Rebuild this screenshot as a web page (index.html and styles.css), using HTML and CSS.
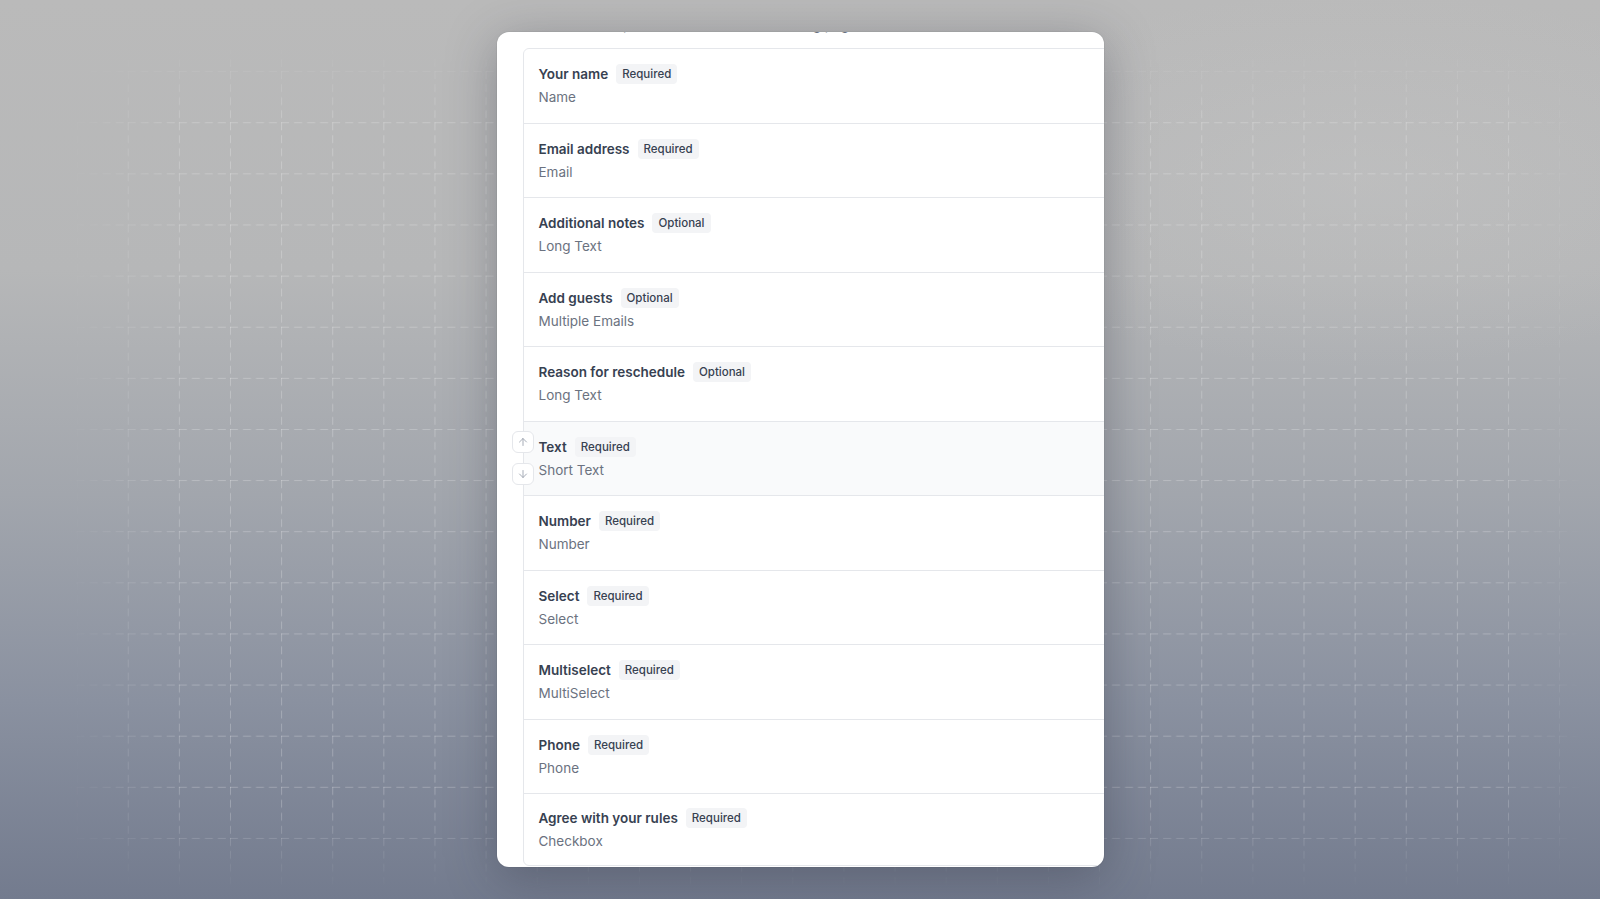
FILE: index.html
```html
<!DOCTYPE html>
<html lang="en">
<head>
<meta charset="utf-8">
<title>Booking questions</title>
<link rel="stylesheet" href="styles.css">
</head>
<body>
<svg class="grid" width="1600" height="899" aria-hidden="true">
  <defs>
    <pattern id="cells" x="25.5" y="20" width="51.12" height="51.12" patternUnits="userSpaceOnUse">
      <line x1="0.5" y1="0" x2="0.5" y2="51.12" stroke="rgba(255,255,255,0.24)" stroke-width="1" stroke-dasharray="8 5"/>
      <line x1="0" y1="0.5" x2="51.12" y2="0.5" stroke="rgba(255,255,255,0.24)" stroke-width="1" stroke-dasharray="8 5"/>
    </pattern>
  </defs>
  <rect width="1600" height="899" fill="url(#cells)"/>
</svg>

<main class="modal">
  <div class="modal-scroll">
    <p class="desc">Customize the questions asked on the booking page</p>
    <div class="card">
      <div class="row">
        <div class="label-line"><span class="label">Your name</span><span class="badge">Required</span></div>
        <div class="type">Name</div>
      </div>
      <div class="row">
        <div class="label-line"><span class="label">Email address</span><span class="badge">Required</span></div>
        <div class="type">Email</div>
      </div>
      <div class="row">
        <div class="label-line"><span class="label">Additional notes</span><span class="badge">Optional</span></div>
        <div class="type">Long Text</div>
      </div>
      <div class="row">
        <div class="label-line"><span class="label">Add guests</span><span class="badge">Optional</span></div>
        <div class="type">Multiple Emails</div>
      </div>
      <div class="row">
        <div class="label-line"><span class="label">Reason for reschedule</span><span class="badge">Optional</span></div>
        <div class="type">Long Text</div>
      </div>
      <div class="row row-hover">
        <div class="move">
          <button class="move-btn" aria-label="Move up">
            <svg viewBox="0 0 24 24" width="12" height="12"><path d="M12 19V5M5 12l7-7 7 7"/></svg>
          </button>
          <button class="move-btn" aria-label="Move down">
            <svg viewBox="0 0 24 24" width="12" height="12"><path d="M12 5v14M19 12l-7 7-7-7"/></svg>
          </button>
        </div>
        <div class="label-line"><span class="label">Text</span><span class="badge">Required</span></div>
        <div class="type">Short Text</div>
      </div>
      <div class="row">
        <div class="label-line"><span class="label">Number</span><span class="badge">Required</span></div>
        <div class="type">Number</div>
      </div>
      <div class="row">
        <div class="label-line"><span class="label">Select</span><span class="badge">Required</span></div>
        <div class="type">Select</div>
      </div>
      <div class="row">
        <div class="label-line"><span class="label">Multiselect</span><span class="badge">Required</span></div>
        <div class="type">MultiSelect</div>
      </div>
      <div class="row">
        <div class="label-line"><span class="label">Phone</span><span class="badge">Required</span></div>
        <div class="type">Phone</div>
      </div>
      <div class="row row-last">
        <div class="label-line"><span class="label">Agree with your rules</span><span class="badge">Required</span></div>
        <div class="type">Checkbox</div>
      </div>
    </div>
  </div>
</main>
</body>
</html>
```

FILE: styles.css
```css
* { box-sizing: border-box; }

html, body { height: 100%; }

body {
  margin: 0;
  height: 899px;
  display: flex;
  align-items: center;
  justify-content: center;
  font-family: Inter, "Noto Sans", "Liberation Sans", sans-serif;
  background:
    radial-gradient(ellipse 40% 30% at 85% 20%, rgba(200,200,200,0.35), rgba(200,200,200,0) 70%),
    linear-gradient(180deg, #bababa 0%, #b6b7b8 30%, #a2a6ad 55%, #8a91a0 78%, #737b8e 100%);
  overflow: hidden;
}

.grid {
  position: absolute;
  left: 0;
  top: 0;
  pointer-events: none;
  -webkit-mask-image:
    linear-gradient(90deg, transparent 4%, #000 12%, #000 93%, transparent 99%),
    linear-gradient(180deg, transparent 5%, #000 14%, #000 90%, transparent 99%);
  -webkit-mask-composite: source-in;
  mask-image:
    linear-gradient(90deg, transparent 4%, #000 12%, #000 93%, transparent 99%),
    linear-gradient(180deg, transparent 5%, #000 14%, #000 90%, transparent 99%);
  mask-composite: intersect;
}

.modal {
  position: relative;
  width: 607px;
  height: 835px;
  background: #fff;
  border-radius: 12px;
  overflow: hidden;
  padding-left: 26px;
  box-shadow: 0 10px 50px rgba(40, 44, 56, 0.35), 0 0 0 1px rgba(0,0,0,0.04);
}

.modal-scroll {
  margin-top: -17px;
}

.desc {
  margin: 0 0 13px;
  font-size: 13.5px;
  line-height: 20px;
  color: #6b7280;
  white-space: nowrap;
}

.card {
  width: 660px;
  border: 1px solid #e5e7eb;
  border-radius: 6px;
}

.row {
  position: relative;
  height: 74.5px;
  padding-left: 15px;
  display: flex;
  flex-direction: column;
  justify-content: center;
  gap: 3px;
  border-bottom: 1px solid #e5e7eb;
}

.row-last {
  height: 71px;
  border-bottom: none;
}

.row-hover {
  background: #f9fafb;
}

.label-line {
  display: flex;
  align-items: center;
  gap: 8px;
  height: 20px;
}

.label {
  font-size: 13.5px;
  line-height: 20px;
  font-weight: 600;
  color: #374151;
}

.badge {
  display: inline-flex;
  align-items: center;
  height: 20px;
  padding: 0 6px;
  border-radius: 4px;
  background: #f3f4f6;
  color: #374151;
  font-size: 11.5px;
  font-weight: 500;
}

.type {
  font-size: 13.5px;
  line-height: 20px;
  color: #6b7280;
}

.move {
  position: absolute;
  left: -12px;
  top: 9px;
  display: flex;
  flex-direction: column;
  gap: 10px;
}

.move-btn {
  width: 22px;
  height: 22px;
  padding: 0;
  display: flex;
  align-items: center;
  justify-content: center;
  background: #fff;
  border: 1px solid #e5e7eb;
  border-radius: 6px;
}

.move-btn svg {
  fill: none;
  stroke: #9ca3af;
  stroke-width: 1.8;
  stroke-linecap: round;
  stroke-linejoin: round;
}
```
